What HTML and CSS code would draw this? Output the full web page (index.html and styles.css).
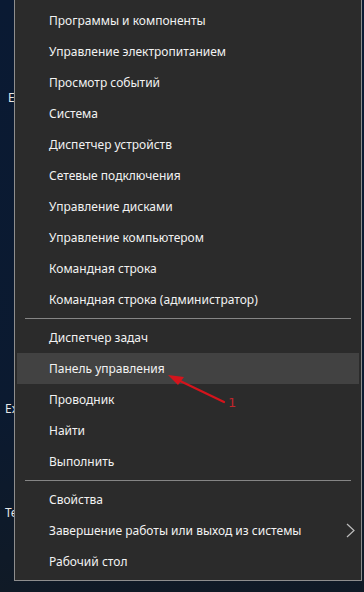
FILE: index.html
```html
<!DOCTYPE html>
<html lang="ru">
<head>
<meta charset="utf-8">
<link rel="stylesheet" href="styles.css">
</head>
<body>
<div class="desktop">
  <span class="label label-e">E</span>
  <span class="label label-ex">Ex</span>
  <span class="label label-te">Te</span>
  <div class="menu">
    <div class="item">Программы и компоненты</div>
    <div class="item">Управление электропитанием</div>
    <div class="item">Просмотр событий</div>
    <div class="item">Система</div>
    <div class="item">Диспетчер устройств</div>
    <div class="item">Сетевые подключения</div>
    <div class="item">Управление дисками</div>
    <div class="item">Управление компьютером</div>
    <div class="item">Командная строка</div>
    <div class="item">Командная строка (администратор)</div>
    <div class="sep"></div>
    <div class="item">Диспетчер задач</div>
    <div class="item active">Панель управления</div>
    <div class="item">Проводник</div>
    <div class="item">Найти</div>
    <div class="item">Выполнить</div>
    <div class="sep"></div>
    <div class="item">Свойства</div>
    <div class="item sub">Завершение работы или выход из системы
      <svg class="chev" width="9" height="15" viewBox="0 0 9 15"><polyline points="1,1 8,7.5 1,14" fill="none" stroke="#bdbdbd" stroke-width="1.2"/></svg>
    </div>
    <div class="item">Рабочий стол</div>
  </div>
  <svg class="annot" width="80" height="50" viewBox="0 0 80 50">
    <line x1="62" y1="35" x2="14" y2="12" stroke="#d4141c" stroke-width="2.2" stroke-linecap="round"/>
    <polygon points="6,8 22,10 16,18" fill="#d4141c"/>
    <text x="66" y="40" class="num">1</text>
  </svg>
</div>
</body>
</html>
```
FILE: styles.css
```css
* { box-sizing: border-box; }
html, body { margin: 0; padding: 0; }
body { background: #0c1829; font-family: "Noto Sans", "Open Sans", sans-serif; }
.desktop {
  position: relative;
  width: 364px;
  height: 592px;
  overflow: hidden;
  background: linear-gradient(180deg, #0a1a33 0%, #0b1a30 70%, #101a26 100%);
}
.label {
  position: absolute;
  color: #e8e8e8;
  font-size: 12px;
  line-height: 14px;
}
.label-e { left: 8px; top: 91px; }
.label-ex { left: 5px; top: 402px; }
.label-te { left: 5px; top: 506px; }
.menu {
  position: relative;
  z-index: 1;
  margin-left: 14px;
  width: 348px;
  height: 581px;
  background: #2b2b2b;
  border: 1px solid #8e8e8e;
  border-top: none;
  padding: 5px 0 3px;
}
.item {
  height: 31px;
  line-height: 31px;
  padding-left: 34px;
  color: #f2f2f2;
  font-size: 12px;
  white-space: nowrap;
  display: flex;
  align-items: center;
}
.item.active {
  background: #424242;
  margin: 0 2px;
  padding-left: 32px;
}
.item.sub { position: relative; }
.chev { position: absolute; right: 6px; top: 8px; }
.sep {
  height: 1px;
  margin: 3px 10px 3px 10px;
  background: #858585;
}
.annot {
  position: absolute;
  z-index: 2;
  left: 162px;
  top: 367px;
}
.num {
  font-family: "DejaVu Sans", sans-serif;
  font-size: 13px;
  fill: #c0262c;
}
```
